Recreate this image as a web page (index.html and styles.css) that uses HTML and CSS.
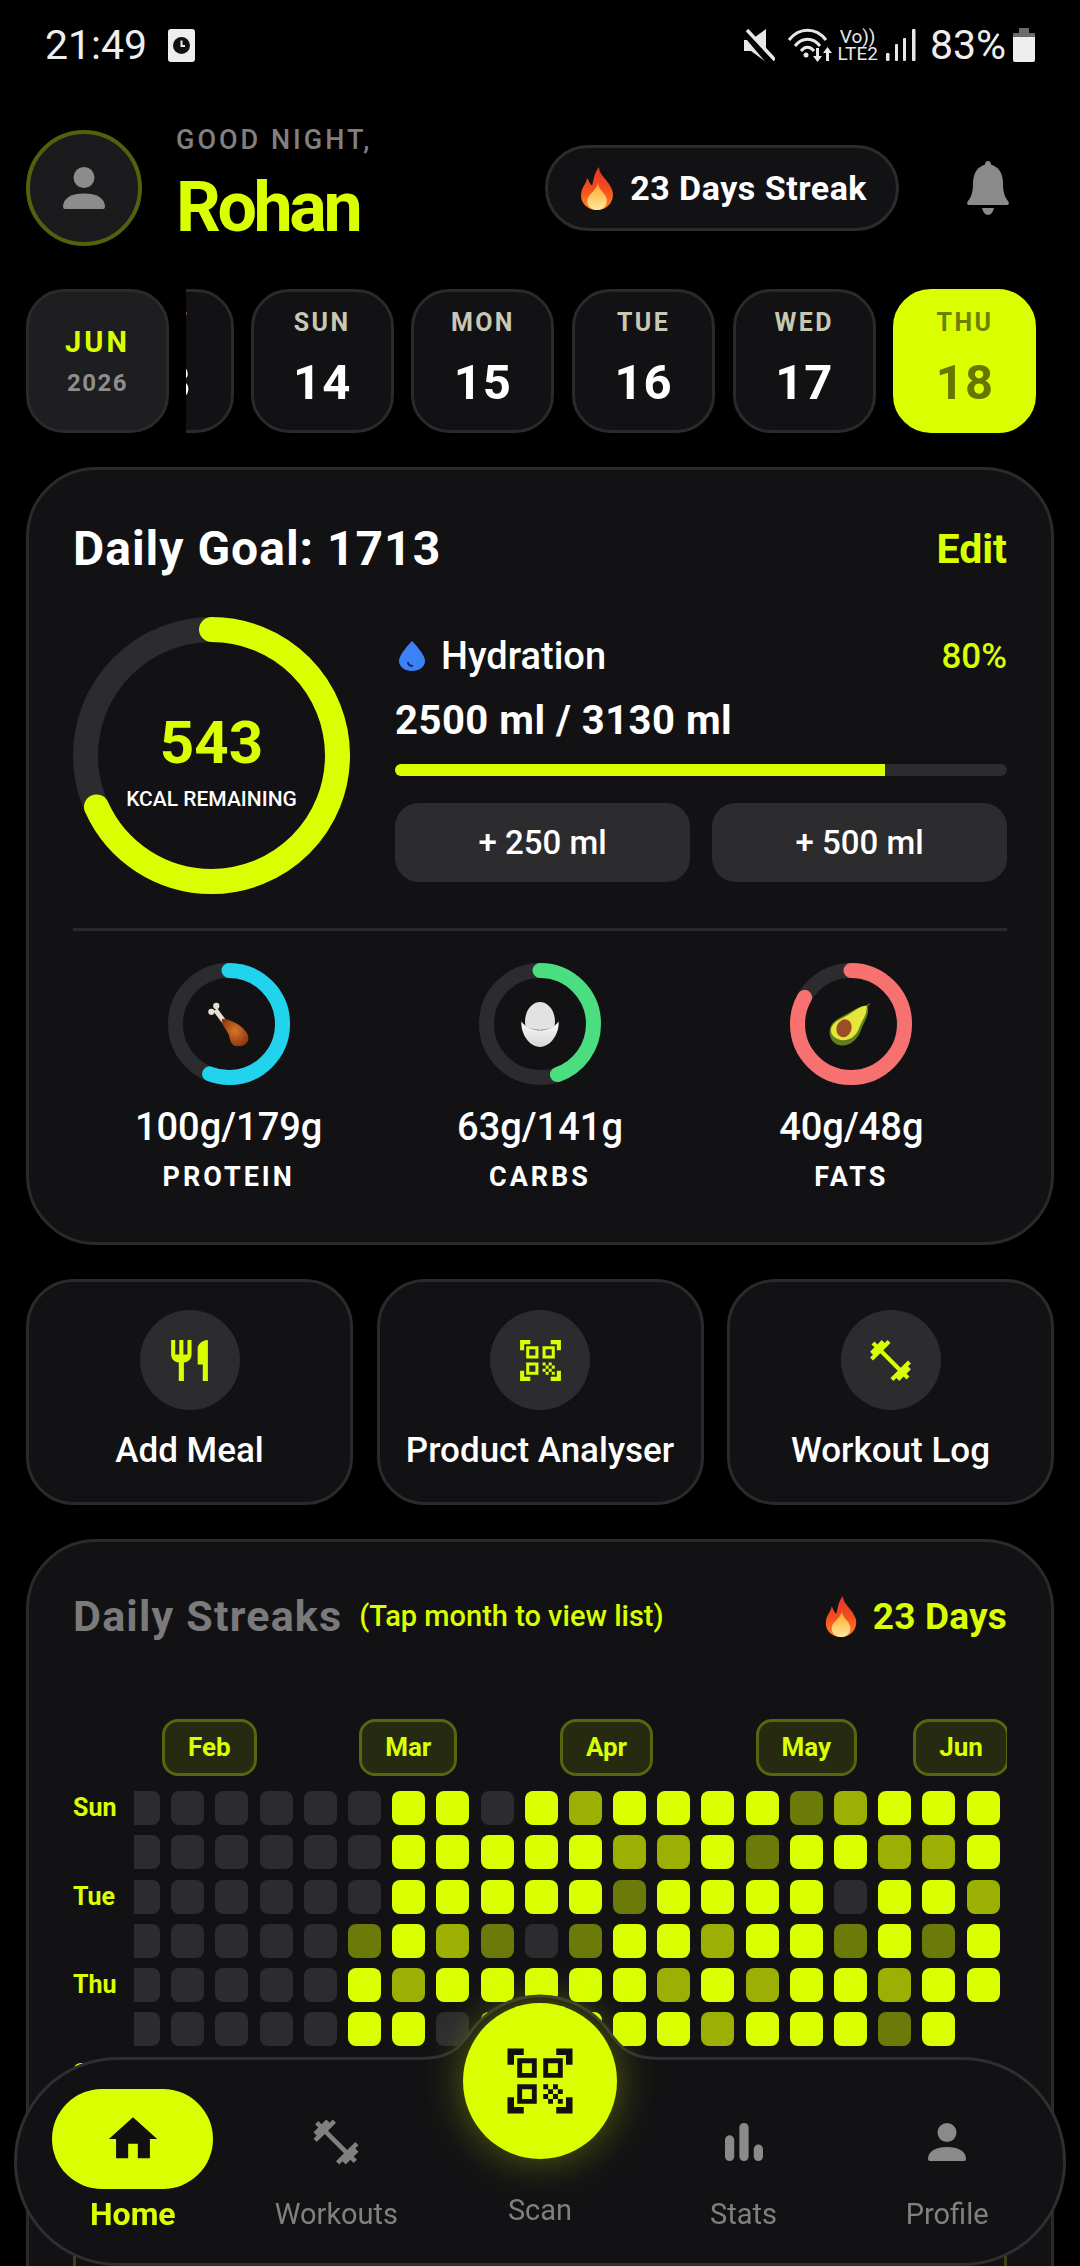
FILE: index.html
```html
<!DOCTYPE html>
<html lang="en">
<head>
    <meta charset="UTF-8">
    <meta name="viewport" content="width=device-width, initial-scale=1.0">
    <title>Dashboard</title>
    <link rel="stylesheet" href="styles.css">
</head>
<body>

<svg class="sprite" width="0" height="0" aria-hidden="true">
    <defs>
        <linearGradient id="flameOuter" x1="0" y1="0" x2="0" y2="1">
            <stop offset="0" stop-color="#e5322d"/>
            <stop offset="0.55" stop-color="#f4511e"/>
            <stop offset="1" stop-color="#ff8a1f"/>
        </linearGradient>
        <linearGradient id="flameInner" x1="0" y1="0" x2="0" y2="1">
            <stop offset="0" stop-color="#ffa726"/>
            <stop offset="1" stop-color="#ffe9a0"/>
        </linearGradient>
        <radialGradient id="chicken" cx="0.5" cy="0.45" r="0.65">
            <stop offset="0" stop-color="#d8752a"/>
            <stop offset="1" stop-color="#83300a"/>
        </radialGradient>
        <linearGradient id="bowl" x1="0" y1="0" x2="0" y2="1">
            <stop offset="0" stop-color="#fafafa"/>
            <stop offset="1" stop-color="#d6d6d6"/>
        </linearGradient>
    </defs>
    <symbol id="flame" viewBox="0 0 36 44">
        <path fill="url(#flameOuter)" d="M20 0C20 9 31 14 34 25C36 36 28 44 18 44C8 44 0 36 2 26C3 20 7 17 8 11C10 15 11 18 13 19C15 12 15 6 20 0Z"/>
        <path fill="url(#flameInner)" d="M19 17C20 24 28 28 28 34C28 40 24 44 18 44C12 44 8 40 8 35C8 28 16 26 19 17Z"/>
    </symbol>
    <symbol id="person" viewBox="0 0 38 38">
        <circle cx="19" cy="9.5" r="9.5"/>
        <path d="M0 36C0 28 8 24 19 24S38 28 38 36Q38 38 36 38H2Q0 38 0 36Z"/>
    </symbol>
    <symbol id="dumbbell" viewBox="0 0 24 24">
        <path d="M20.57 14.86L22 13.43 20.57 12 17 15.57 8.43 7 12 3.43 10.57 2 9.14 3.43 7.71 2 5.57 4.14 4.14 2.71 2.71 4.14l1.43 1.43L2 7.71l1.43 1.43L2 10.57 3.43 12 7 8.43 15.57 17 12 20.57 13.43 22l1.43-1.43L16.29 22l2.14-2.14 1.43 1.43 1.43-1.43-1.43-1.43L22 16.29z"/>
    </symbol>
    <symbol id="qr" viewBox="0 0 24 24">
        <path d="M9.5 6.5v3h-3v-3h3M11 5H5v6h6V5zm-1.5 9.5v3h-3v-3h3M11 13H5v6h6v-6zm6.5-6.5v3h-3v-3h3M19 5h-6v6h6V5zm-6 8h1.5v1.5H13V13zm1.5 1.5H16V16h-1.5v-1.5zM16 13h1.5v1.5H16V13zm-3 3h1.5v1.5H13V16zm1.5 1.5H16V19h-1.5v-1.5zM16 16h1.5v1.5H16V16zm1.5-1.5H19V16h-1.5v-1.5zm0 3H19V19h-1.5v-1.5zM22 7h-2V4h-3V2h5v5zm0 15v-5h-2v3h-3v2h5zM2 22h5v-2H4v-3H2v5zM2 2v5h2V4h3V2H2z"/>
    </symbol>
</svg>

<header class="status-bar">
    <div class="status-left">
        <span class="status-time">21:49</span>
        <svg class="status-note" viewBox="0 0 27 33">
            <rect width="27" height="33" rx="3" fill="#eee"/>
            <circle cx="13.5" cy="16.5" r="8.5" fill="#111"/>
            <path d="M13.5 11.5V17H17" fill="none" stroke="#eee" stroke-width="2"/>
        </svg>
    </div>
    <div class="status-right">
        <svg class="status-mute" viewBox="0 0 31 33">
            <path fill="#e8e8e8" d="M0 11H7L22 0V33L7 22H0Z"/>
            <path d="M-1 1L27 34" stroke="#000" stroke-width="7"/>
            <path d="M3 1L31 31" stroke="#e8e8e8" stroke-width="3.5"/>
        </svg>
        <svg class="status-wifi" viewBox="0 0 46 34">
            <g fill="none" stroke="#e8e8e8" stroke-width="3">
                <path d="M1 12C11 -1 28 -1 38 12"/>
                <path d="M7 18C14 9 25 9 32 18"/>
                <path d="M13 23C17 18 22 18 26 23"/>
            </g>
            <circle cx="18" cy="27" r="2.5" fill="#e8e8e8"/>
            <path fill="#e8e8e8" d="M28 20h3v8h3l-4.500 6l-4.500-6h3zM41 33h-3v-8h-3l4.500-6l4.500 6h-3z"/>
        </svg>
        <div class="status-volte">
            <span>Vo))</span>
            <span>LTE2</span>
        </div>
        <svg class="status-signal" viewBox="0 0 30 32" fill="#e8e8e8">
            <rect x="0" y="24" width="3.500" height="8" rx="1"/>
            <rect x="9" y="15" width="3" height="17" rx="1"/>
            <rect x="17" y="9" width="3" height="23" rx="1"/>
            <rect x="26" y="0" width="3.500" height="32" rx="1"/>
        </svg>
        <span class="status-pct">83%</span>
        <svg class="status-battery" viewBox="0 0 22 34">
            <path fill="#6a6a6a" d="M6 0H16V5H21Q22 5 22 6V9H0V6Q0 5 1 5H6Z"/>
            <path fill="#eee" d="M0 9H22V32Q22 34 20 34H2Q0 34 0 32Z"/>
        </svg>
    </div>
</header>

<main class="page">
    <section class="top-row">
        <div class="avatar">
            <svg class="avatar-icon"><use href="#person"/></svg>
        </div>
        <div class="greeting">
            <div class="greeting-small">GOOD NIGHT,</div>
            <div class="greeting-name">Rohan</div>
        </div>
        <div class="streak-pill">
            <svg class="pill-flame"><use href="#flame"/></svg>
            <span>23 Days Streak</span>
        </div>
        <svg class="bell" viewBox="0 0 42 54">
            <path d="M21 0C23 0 24 1.500 24 3.500C32 6 36 13 36 22C36 32 38 36 41 40C42.500 42 42 44 40 44H2C0 44 -0.500 42 1 40C4 36 6 32 6 22C6 13 10 6 18 3.500C18 1.500 19 0 21 0Z"/>
            <path d="M15 47H27C26 51 24 54 21 54S16 51 15 47Z"/>
        </svg>
    </section>

    <section class="date-row">
        <div class="date-card date-month">
            <div class="month-name">JUN</div>
            <div class="month-year">2026</div>
        </div>
        <div class="date-scroll">
            <div class="date-track">
                <div class="date-card"><div class="day-name">SAT</div><div class="day-num">13</div></div>
                <div class="date-card"><div class="day-name">SUN</div><div class="day-num">14</div></div>
                <div class="date-card"><div class="day-name">MON</div><div class="day-num">15</div></div>
                <div class="date-card"><div class="day-name">TUE</div><div class="day-num">16</div></div>
                <div class="date-card"><div class="day-name">WED</div><div class="day-num">17</div></div>
                <div class="date-card date-active"><div class="day-name">THU</div><div class="day-num">18</div></div>
            </div>
        </div>
    </section>

    <section class="card goal-card">
        <div class="goal-head">
            <h2>Daily Goal: 1713</h2>
            <span class="edit">Edit</span>
        </div>
        <div class="goal-body">
            <div class="kcal-ring">
                <svg viewBox="0 0 277 277">
                    <circle class="ring-track" cx="138.500" cy="138.500" r="126" stroke-width="25"/>
                    <circle class="ring-value ring-lime" cx="138.500" cy="138.500" r="126" stroke-width="25" pathLength="100" stroke-dasharray="68.300 100"/>
                </svg>
                <div class="kcal-text">
                    <div class="kcal-num">543</div>
                    <div class="kcal-label">KCAL REMAINING</div>
                </div>
            </div>
            <div class="hydration">
                <div class="hydration-head">
                    <svg class="drop" viewBox="0 0 26 30">
                        <path fill="#3b82f6" d="M13 0C13 0 26 13 26 20C26 26 20 30 13 30C6 30 0 26 0 20C0 13 13 0 13 0Z"/>
                        <path fill="none" stroke="#0d2a66" stroke-width="2" d="M9 21C9 24 11 25 14 25"/>
                    </svg>
                    <span class="hydration-title">Hydration</span>
                    <span class="hydration-pct">80%</span>
                </div>
                <div class="hydration-amount">2500 ml / 3130 ml</div>
                <div class="bar"><div class="bar-fill" style="width: 80%"></div></div>
                <div class="hydration-btns">
                    <div class="water-btn">+ 250 ml</div>
                    <div class="water-btn">+ 500 ml</div>
                </div>
            </div>
        </div>
        <div class="divider"></div>
        <div class="macros">
            <div class="macro">
                <div class="macro-ring">
                    <svg viewBox="0 0 122 122">
                        <circle class="ring-track" cx="61" cy="61" r="53.500" stroke-width="15"/>
                        <circle class="ring-value ring-blue" cx="61" cy="61" r="53.500" stroke-width="15" pathLength="100" stroke-dasharray="55.900 100"/>
                    </svg>
                    <svg class="macro-food" viewBox="0 0 44 46">
                        <path d="M8 8L20 24" stroke="#e6dfd2" stroke-width="5"/>
                        <circle cx="4" cy="10" r="3.200" fill="#e6dfd2"/>
                        <circle cx="9" cy="4" r="3.200" fill="#e6dfd2"/>
                        <path fill="url(#chicken)" d="M15 17C23 17 37 24 41 33C44 41 38 46 31 45C25 46 23 40 22 34C20 28 13 23 15 17Z"/>
                    </svg>
                </div>
                <div class="macro-value">100g/179g</div>
                <div class="macro-label">PROTEIN</div>
            </div>
            <div class="macro">
                <div class="macro-ring">
                    <svg viewBox="0 0 122 122">
                        <circle class="ring-track" cx="61" cy="61" r="53.500" stroke-width="15"/>
                        <circle class="ring-value ring-green" cx="61" cy="61" r="53.500" stroke-width="15" pathLength="100" stroke-dasharray="44.700 100"/>
                    </svg>
                    <svg class="macro-food" viewBox="0 0 38 46">
                        <path fill="#e2e2e2" d="M4 24C2 9 11 0 19 0S36 9 34 24C28 30 10 30 4 24Z"/>
                        <path fill="url(#bowl)" d="M0 20C4 26 12 29 19 29S34 26 38 20C39 32 30 46 19 46S-1 32 0 20Z"/>
                    </svg>
                </div>
                <div class="macro-value">63g/141g</div>
                <div class="macro-label">CARBS</div>
            </div>
            <div class="macro">
                <div class="macro-ring">
                    <svg viewBox="0 0 122 122">
                        <circle class="ring-track" cx="61" cy="61" r="53.500" stroke-width="15"/>
                        <circle class="ring-value ring-red" cx="61" cy="61" r="53.500" stroke-width="15" pathLength="100" stroke-dasharray="83.300 100"/>
                    </svg>
                    <svg class="macro-food" viewBox="0 0 41 41">
                        <path d="M35 4L38 1" stroke="#7a4a20" stroke-width="1.500"/>
                        <path fill="#5f7f1e" d="M36 3C38 12 33 17 30 25C27 35 19 41 11 40C3 39 -1 31 1 24C3 17 9 15 16 11C24 7 30 2 36 3Z"/>
                        <path fill="#e4e63c" d="M35 3C36 11 31 16 28 24C25 32 18 36 11 35C4 33 1 29 2 24C4 18 10 16 17 12C24 8 29 3 35 3Z"/>
                        <ellipse cx="14" cy="24" rx="7" ry="8.500" fill="#9c4f26" transform="rotate(20 14 24)"/>
                    </svg>
                </div>
                <div class="macro-value">40g/48g</div>
                <div class="macro-label">FATS</div>
            </div>
        </div>
    </section>

    <section class="actions">
        <div class="action">
            <div class="action-circle">
                <svg viewBox="0 0 24 24"><path d="M11 9H9V2H7v7H5V2H3v7c0 2.120 1.660 3.840 3.750 3.970V22h2.500v-9.030C11.340 12.840 13 11.120 13 9V2h-2v7zm5-3v8h2.500v8H21V2c-2.760 0-5 2.240-5 4z"/></svg>
            </div>
            <div class="action-label">Add Meal</div>
        </div>
        <div class="action">
            <div class="action-circle">
                <svg><use href="#qr"/></svg>
            </div>
            <div class="action-label">Product Analyser</div>
        </div>
        <div class="action">
            <div class="action-circle">
                <svg><use href="#dumbbell"/></svg>
            </div>
            <div class="action-label">Workout Log</div>
        </div>
    </section>

    <section class="card streak-card">
        <div class="streak-head">
            <h2>Daily Streaks</h2>
            <span class="streak-hint">(Tap month to view list)</span>
            <span class="streak-count">
                <svg class="count-flame"><use href="#flame"/></svg>
                23 Days
            </span>
        </div>
        <div class="calendar">
            <div class="day-labels">
                <span>Sun</span><span></span><span>Tue</span><span></span><span>Thu</span><span></span><span>Sat</span>
            </div>
            <div class="cal-scroll">
                <div class="month-row">
                    <div class="month-chip">Feb</div>
                    <div class="month-chip chip-wide">Mar</div>
                    <div class="month-chip chip-wide">Apr</div>
                    <div class="month-chip chip-wide">May</div>
                    <div class="month-chip chip-narrow">Jun</div>
                </div>
                <div class="cal-grid">
                    <i></i><i></i><i></i><i></i><i></i><i></i><i class="l3"></i><i class="l3"></i><i></i><i class="l3"></i><i class="l2"></i><i class="l3"></i><i class="l3"></i><i class="l3"></i><i class="l3"></i><i class="l1"></i><i class="l2"></i><i class="l3"></i><i class="l3"></i><i class="l3"></i>
                    <i></i><i></i><i></i><i></i><i></i><i></i><i class="l3"></i><i class="l3"></i><i class="l3"></i><i class="l3"></i><i class="l3"></i><i class="l2"></i><i class="l2"></i><i class="l3"></i><i class="l1"></i><i class="l3"></i><i class="l3"></i><i class="l2"></i><i class="l2"></i><i class="l3"></i>
                    <i></i><i></i><i></i><i></i><i></i><i></i><i class="l3"></i><i class="l3"></i><i class="l3"></i><i class="l3"></i><i class="l3"></i><i class="l1"></i><i class="l3"></i><i class="l3"></i><i class="l3"></i><i class="l3"></i><i></i><i class="l3"></i><i class="l3"></i><i class="l2"></i>
                    <i></i><i></i><i></i><i></i><i></i><i class="l1"></i><i class="l3"></i><i class="l2"></i><i class="l1"></i><i></i><i class="l1"></i><i class="l3"></i><i class="l3"></i><i class="l2"></i><i class="l3"></i><i class="l3"></i><i class="l1"></i><i class="l3"></i><i class="l1"></i><i class="l3"></i>
                    <i></i><i></i><i></i><i></i><i></i><i class="l3"></i><i class="l2"></i><i class="l3"></i><i class="l3"></i><i class="l3"></i><i class="l3"></i><i class="l3"></i><i class="l2"></i><i class="l3"></i><i class="l2"></i><i class="l3"></i><i class="l3"></i><i class="l2"></i><i class="l3"></i><i class="l3"></i>
                    <i></i><i></i><i></i><i></i><i></i><i class="l3"></i><i class="l3"></i><i></i><i class="l3"></i><i></i><i class="l3"></i><i class="l3"></i><i class="l3"></i><i class="l2"></i><i class="l3"></i><i class="l3"></i><i class="l3"></i><i class="l1"></i><i class="l3"></i><i class="none"></i>
                    <i></i><i></i><i></i><i></i><i></i><i class="l3"></i><i class="l3"></i><i></i><i></i><i></i><i></i><i></i><i></i><i class="l1"></i><i class="l1"></i><i class="l1"></i><i class="l1"></i><i class="l1"></i><i class="l1"></i><i class="none"></i>
                </div>
            </div>
        </div>
        <div class="streak-foot"></div>
    </section>
</main>

<nav class="bottom-nav">
    <svg class="nav-bump" viewBox="0 0 260 76">
        <path class="bump-fill" d="M0 68.500H10C40 68.500 50 58 62 40A85 85 0 0 1 198 40C210 58 220 68.500 250 68.500H260V76H0Z"/>
        <path class="bump-line" d="M0 68.500H10C40 68.500 50 58 62 40A85 85 0 0 1 198 40C210 58 220 68.500 250 68.500H260"/>
    </svg>
    <div class="scan-btn"><svg><use href="#qr"/></svg></div>

    <div class="nav-item nav-active">
        <div class="nav-icon">
            <svg class="home-icon" viewBox="0 0 24 24"><path d="M10 20v-6h4v6h5v-8h3L12 3 2 12h3v8z"/></svg>
        </div>
        <div class="nav-label">Home</div>
    </div>
    <div class="nav-item">
        <div class="nav-icon"><svg class="gym-icon"><use href="#dumbbell"/></svg></div>
        <div class="nav-label">Workouts</div>
    </div>
    <div class="nav-item">
        <div class="nav-icon"></div>
        <div class="nav-label scan-label">Scan</div>
    </div>
    <div class="nav-item">
        <div class="nav-icon">
            <svg class="small-icon" viewBox="0 0 37 37">
                <rect x="0" y="12" width="9" height="25" rx="4.500"/>
                <rect x="14" y="0" width="9" height="37" rx="4.500"/>
                <rect x="28" y="21" width="9" height="16" rx="4.500"/>
            </svg>
        </div>
        <div class="nav-label">Stats</div>
    </div>
    <div class="nav-item">
        <div class="nav-icon"><svg class="small-icon"><use href="#person"/></svg></div>
        <div class="nav-label">Profile</div>
    </div>
</nav>

</body>
</html>
```

FILE: styles.css
```css
* {
    box-sizing: border-box;
}
html,
body {
    height: 2266px;
    overflow: hidden;
}
body {
    width: 1080px;
    margin: 0;
    background: #000;
    color: #fff;
    font-family: Roboto, "Liberation Sans", sans-serif;
}
h2 {
    margin: 0;
}
.sprite {
    position: absolute;
}

/* status bar */
.status-bar {
    display: flex;
    justify-content: space-between;
    align-items: center;
    height: 90px;
    padding: 0 45px;
    color: #eee;
}
.status-left,
.status-right {
    display: flex;
    align-items: center;
}
.status-time {
    font-size: 41px;
    line-height: 46px;
}
.status-note {
    width: 27px;
    height: 33px;
    margin-left: 21px;
}
.status-mute {
    width: 31px;
    height: 33px;
}
.status-wifi {
    width: 46px;
    height: 34px;
    margin-left: 13px;
}
.status-volte {
    display: flex;
    flex-direction: column;
    align-items: center;
    margin-left: 3px;
    font-size: 19px;
    line-height: 17px;
    color: #e8e8e8;
}
.status-signal {
    width: 30px;
    height: 32px;
    margin-left: 8px;
}
.status-pct {
    margin-left: 14px;
    font-size: 41px;
    line-height: 46px;
}
.status-battery {
    width: 22px;
    height: 34px;
    margin-left: 7px;
}

.page {
    height: 2176px;
    padding: 0 26px;
    overflow: hidden;
}

/* greeting row */
.top-row {
    display: flex;
    align-items: center;
    height: 116px;
    margin-top: 40px;
}
.avatar {
    display: flex;
    justify-content: center;
    align-items: center;
    width: 116px;
    height: 116px;
    border: 4px solid #55600c;
    border-radius: 50%;
    background: #1b1b1d;
}
.avatar-icon {
    width: 42px;
    height: 42px;
    fill: #8c8c8c;
}
.greeting {
    margin-left: 34px;
    margin-top: -7px;
}
.greeting-small {
    font-size: 27px;
    line-height: 28px;
    font-weight: 500;
    letter-spacing: 3px;
    color: #808080;
}
.greeting-name {
    margin-top: 17px;
    font-size: 70px;
    line-height: 72px;
    font-weight: 700;
    letter-spacing: -3.400px;
    color: #d9ff00;
}
.streak-pill {
    display: flex;
    align-items: center;
    height: 86px;
    margin-left: auto;
    padding: 0 29px 0 31px;
    border: 3px solid #2c2c2e;
    border-radius: 43px;
    background: #121214;
    font-size: 34px;
    font-weight: 700;
    letter-spacing: 0.500px;
}
.pill-flame {
    width: 36px;
    height: 43px;
    margin-right: 15px;
}
.bell {
    width: 42px;
    height: 54px;
    margin-left: 68px;
    margin-right: 45px;
    fill: #8a8a8a;
}

/* date strip */
.date-row {
    display: flex;
    gap: 17px;
    margin-top: 43px;
}
.date-card {
    display: flex;
    flex-direction: column;
    align-items: center;
    flex: none;
    width: 143px;
    height: 144px;
    border: 3px solid #2a2a2c;
    border-radius: 38px;
    background: #121214;
}
.date-month {
    background: #1e1e20;
}
.month-name {
    margin-top: 33px;
    font-size: 29px;
    line-height: 34px;
    font-weight: 700;
    letter-spacing: 3px;
    color: #d9ff00;
}
.month-year {
    margin-top: 10px;
    font-size: 24px;
    line-height: 28px;
    font-weight: 700;
    letter-spacing: 1.500px;
    color: #8e8e8e;
}
.date-scroll {
    flex: 1;
    overflow: hidden;
}
.date-track {
    display: flex;
    gap: 17.700px;
    margin-left: -95px;
}
.date-track .date-card:first-child {
    margin-right: -1px;
}
.day-name {
    margin-top: 17px;
    font-size: 25px;
    line-height: 28px;
    font-weight: 700;
    letter-spacing: 2.400px;
    color: #c8c8b4;
}
.day-num {
    margin-top: 18px;
    font-size: 49px;
    line-height: 56px;
    font-weight: 700;
    letter-spacing: 1px;
}
.date-active {
    border-color: #d9ff00;
    background: #d9ff00;
}
.date-active .day-name {
    color: #6f7f00;
}
.date-active .day-num {
    color: #667600;
}

/* cards */
.card {
    border: 3px solid #2a2a2c;
    border-radius: 70px;
    background: #121214;
    padding: 0 44px;
}
.goal-card {
    height: 778px;
    margin-top: 34px;
}
.goal-head {
    display: flex;
    justify-content: space-between;
    align-items: center;
    height: 60px;
    margin-top: 49px;
}
.goal-head h2 {
    font-size: 48px;
    line-height: 60px;
    font-weight: 700;
    letter-spacing: 1px;
}
.edit {
    font-size: 41px;
    font-weight: 700;
    color: #d9ff00;
}
.goal-body {
    display: flex;
    gap: 45px;
    margin-top: 38px;
}
.kcal-ring {
    position: relative;
    flex: none;
    width: 277px;
    height: 277px;
}
.kcal-ring svg,
.macro-ring > svg:first-child {
    display: block;
    width: 100%;
    height: 100%;
    transform: rotate(-90deg);
}
.ring-track,
.ring-value {
    fill: none;
}
.ring-track {
    stroke: #2c2c2e;
}
.ring-value {
    stroke-linecap: round;
}
.ring-lime {
    stroke: #d9ff00;
}
.ring-blue {
    stroke: #22d3ee;
}
.ring-green {
    stroke: #4ade80;
}
.ring-red {
    stroke: #f87171;
}
.kcal-text {
    position: absolute;
    inset: 0;
    text-align: center;
}
.kcal-num {
    margin-top: 91px;
    font-size: 60px;
    line-height: 70px;
    font-weight: 700;
    color: #d9ff00;
}
.kcal-label {
    margin-top: 9px;
    font-size: 21px;
    line-height: 24px;
    font-weight: 500;
}
.hydration {
    flex: 1;
    padding-top: 17px;
}
.hydration-head {
    display: flex;
    align-items: center;
    height: 44px;
    padding-left: 4px;
}
.drop {
    width: 26px;
    height: 30px;
    margin-right: 16px;
}
.hydration-title {
    font-size: 38px;
    font-weight: 500;
}
.hydration-pct {
    margin-left: auto;
    font-size: 35px;
    font-weight: 500;
    color: #d9ff00;
}
.hydration-amount {
    margin-top: 21px;
    font-size: 40px;
    line-height: 44px;
    font-weight: 700;
    letter-spacing: 0.500px;
}
.bar {
    height: 12px;
    margin-top: 21px;
    border-radius: 6px;
    background: #2c2c2e;
    overflow: hidden;
}
.bar-fill {
    height: 100%;
    background: #d9ff00;
}
.hydration-btns {
    display: flex;
    gap: 22px;
    margin-top: 27px;
}
.water-btn {
    flex: 1;
    height: 79px;
    border-radius: 24px;
    background: #2c2c2e;
    font-size: 33px;
    font-weight: 500;
    line-height: 79px;
    text-align: center;
}
.divider {
    height: 3px;
    margin-top: 34px;
    background: #2a2a2c;
}
.macros {
    display: grid;
    grid-template-columns: repeat(3, 1fr);
    margin-top: 32px;
}
.macro {
    display: flex;
    flex-direction: column;
    align-items: center;
}
.macro-ring {
    position: relative;
    width: 122px;
    height: 122px;
}
.macro-food {
    position: absolute;
    top: 39px;
    left: 39px;
    width: 44px;
    height: 45px;
}
.macro-value {
    margin-top: 21px;
    font-size: 38px;
    line-height: 42px;
    font-weight: 500;
}
.macro-label {
    margin-top: 14px;
    font-size: 27px;
    line-height: 30px;
    font-weight: 700;
    letter-spacing: 3px;
}

/* quick actions */
.actions {
    display: grid;
    grid-template-columns: repeat(3, 1fr);
    gap: 23.500px;
    margin-top: 34px;
}
.action {
    display: flex;
    flex-direction: column;
    align-items: center;
    height: 226px;
    border: 3px solid #2a2a2c;
    border-radius: 48px;
    background: #121214;
}
.action-circle {
    display: flex;
    justify-content: center;
    align-items: center;
    width: 100px;
    height: 100px;
    margin-top: 28px;
    border-radius: 50%;
    background: #2c2c2e;
}
.action-circle svg {
    width: 49px;
    height: 49px;
    fill: #d9ff00;
}
.action-label {
    margin-top: 21px;
    font-size: 35px;
    line-height: 40px;
    font-weight: 500;
}

/* streak calendar */
.streak-card {
    height: 900px;
    margin-top: 34px;
}
.streak-head {
    display: flex;
    align-items: center;
    height: 50px;
    margin-top: 49px;
}
.streak-head h2 {
    font-size: 43px;
    font-weight: 700;
    letter-spacing: 1.200px;
    color: #7a7a7a;
}
.streak-hint {
    margin-left: 17px;
    font-size: 29px;
    font-weight: 500;
    color: #d9ff00;
}
.streak-count {
    display: flex;
    align-items: center;
    margin-left: auto;
    font-size: 37px;
    font-weight: 700;
    letter-spacing: 0.200px;
    color: #d9ff00;
}
.count-flame {
    width: 38px;
    height: 41px;
    margin-right: 13px;
}
.calendar {
    display: flex;
    margin-top: 78px;
}
.day-labels {
    display: grid;
    grid-template-rows: repeat(7, 44.300px);
    flex: none;
    width: 61px;
    padding-top: 72px;
    font-size: 25px;
    font-weight: 700;
    line-height: 34px;
    color: #d9ff00;
}
.cal-scroll {
    flex: 1;
    overflow: hidden;
}
.month-row {
    display: flex;
    height: 57px;
    margin-bottom: 15px;
    padding-left: 28px;
}
.month-chip {
    flex: none;
    height: 57px;
    padding: 0 23px;
    border: 3px solid #5a6410;
    border-radius: 16px;
    background: #262a10;
    font-size: 26px;
    font-weight: 700;
    line-height: 51px;
    color: #d9ff00;
}
.chip-wide {
    margin-left: 102.500px;
}
.chip-narrow {
    margin-left: 56px;
}
.cal-grid {
    display: grid;
    grid-template-columns: repeat(20, 33px);
    grid-auto-rows: 34px;
    gap: 10.300px 11.200px;
    margin-left: -7px;
}
.cal-grid i {
    border-radius: 8px;
    background: #2c2c2e;
}
.cal-grid .l1 {
    background: #6b7a08;
}
.cal-grid .l2 {
    background: #9cb004;
}
.cal-grid .l3 {
    background: #d9ff00;
}
.cal-grid .none {
    background: none;
}
.streak-foot {
    height: 300px;
    margin-top: 30px;
    border: 3px solid #3c4210;
    border-radius: 16px;
}

/* bottom nav */
.bottom-nav {
    position: fixed;
    left: 14px;
    top: 2057px;
    display: flex;
    width: 1052px;
    height: 209px;
    padding: 29px 14px 0;
    border: 3px solid #2f2f31;
    border-radius: 104px;
    background: #121214;
}
.nav-bump {
    position: absolute;
    left: 393px;
    top: -70px;
    width: 260px;
    height: 76px;
}
.bump-fill {
    fill: #121214;
}
.bump-line {
    fill: none;
    stroke: #2f2f31;
    stroke-width: 3;
}
.scan-btn {
    position: absolute;
    left: 446px;
    top: -57px;
    display: flex;
    justify-content: center;
    align-items: center;
    width: 154px;
    height: 156px;
    border-radius: 50%;
    background: #d9ff00;
    box-shadow: 0 0 40px rgba(217, 255, 0, 0.35);
}
.scan-btn svg {
    width: 78px;
    height: 78px;
    fill: #111;
}
.nav-item {
    display: flex;
    flex-direction: column;
    align-items: center;
    flex: 1;
}
.nav-icon {
    display: flex;
    justify-content: center;
    align-items: center;
    height: 100px;
}
.nav-active .nav-icon {
    width: 161px;
    border-radius: 50px;
    background: #d9ff00;
}
.home-icon {
    width: 58px;
    height: 58px;
    fill: #111;
}
.gym-icon {
    width: 54px;
    height: 54px;
    margin-top: 6px;
    fill: #808080;
}
.small-icon {
    width: 38px;
    height: 38px;
    margin-top: 6px;
    fill: #8a8a8a;
}
.nav-label {
    margin-top: 7px;
    font-size: 29px;
    line-height: 36px;
    color: #808080;
}
.nav-active .nav-label {
    font-size: 32px;
    font-weight: 700;
    color: #d9ff00;
}
.scan-label {
    margin-top: 3px;
}
```
